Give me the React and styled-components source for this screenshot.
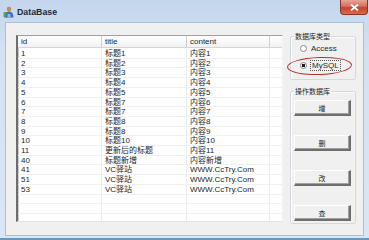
import React from 'react'
import styled, { createGlobalStyle } from 'styled-components'

const rows = [
    ['1', '标题1', '内容1'],
    ['2', '标题2', '内容2'],
    ['3', '标题3', '内容3'],
    ['4', '标题4', '内容4'],
    ['5', '标题5', '内容5'],
    ['6', '标题7', '内容6'],
    ['7', '标题7', '内容7'],
    ['8', '标题8', '内容8'],
    ['9', '标题8', '内容9'],
    ['10', '标题10', '内容10'],
    ['11', '更新后的标题', '内容11'],
    ['40', '标题新增', '内容新增'],
    ['41', 'VC驿站', 'WWW.CcTry.Com'],
    ['51', 'VC驿站', 'WWW.CcTry.Com'],
    ['53', 'VC驿站', 'WWW.CcTry.Com'],
    ['', '', ''],
    ['', '', ''],
    ['', '', ''],
]

const columns = [84, 85, 83]

const AppIcon = () => (
    <svg width="11" height="12" viewBox="0 0 11 12">
        <rect x="0.5" y="6" width="6" height="5.5" rx="1" fill="#5aa84a" />
        <circle cx="6" cy="3" r="2.3" fill="#c98a4a" />
        <path d="M2.5 11.5 C2.5 7 4 5.5 6 5.5 C8 5.5 10.5 7 10.5 11.5 Z" fill="#3f6fc0" />
        <rect x="4.5" y="8" width="3" height="3.5" fill="#8fb8e8" />
    </svg>
)

const App = () => {
    return (
        <>
            <GlobalStyle />
            <Window>
                <TitleBar>
                    <AppIcon />
                    <Title>DataBase</Title>
                    <CloseButton>
                        <svg width="9" height="7" viewBox="0 0 9 7">
                            <path d="M1 0.5 L8 6.5 M8 0.5 L1 6.5" stroke="#fff" strokeWidth="1.8" />
                        </svg>
                    </CloseButton>
                </TitleBar>
                <Client>
                    <ListView>
                        <HeaderRow>
                            <HeaderCell $w={columns[0]}>id</HeaderCell>
                            <HeaderCell $w={columns[1]}>title</HeaderCell>
                            <HeaderCell $w={columns[2]}>content</HeaderCell>
                            <HeaderCell $w={13} />
                        </HeaderRow>
                        <Body>
                            {rows.map((r, i) => (
                                <Row key={i}>
                                    <Cell $w={columns[0]}>{r[0]}</Cell>
                                    <Cell $w={columns[1]}>{r[1]}</Cell>
                                    <Cell $w={columns[2]}>{r[2]}</Cell>
                                    <Cell $w={13} />
                                </Row>
                            ))}
                        </Body>
                    </ListView>
                    <Side>
                        <Group>
                            <Legend>数据库类型</Legend>
                            <RadioRow $top={3}>
                                <Radio />
                                <RadioLabel>Access</RadioLabel>
                            </RadioRow>
                            <RadioRow $top={7}>
                                <Radio $checked />
                                <RadioLabel $focus>MySQL</RadioLabel>
                                <Circled />
                            </RadioRow>
                            <GroupSpacer />
                        </Group>
                        <Group $grow>
                            <Legend>操作数据库</Legend>
                            <Buttons>
                                <Button>增</Button>
                                <Button>删</Button>
                                <Button>改</Button>
                                <Button>查</Button>
                            </Buttons>
                        </Group>
                    </Side>
                </Client>
            </Window>
        </>
    )
}

export default App

const GlobalStyle = createGlobalStyle`
    html, body {
        margin: 0;
        padding: 0;
        background: #d6e3f1;
    }
    * {
        box-sizing: border-box;
    }
`

const Window = styled.div`
    width: 369px;
    height: 240px;
    display: flex;
    flex-direction: column;
    background: linear-gradient(180deg, #c3d6ec 0%, #d3e1f1 20%, #dae6f3 100%);
    padding: 0 5px 2px 5px;
    border-bottom: 2px solid #6a97bd;
    font-family: 'Liberation Sans', 'Noto Sans CJK SC', sans-serif;
`

const TitleBar = styled.div`
    height: 22px;
    flex: none;
    display: flex;
    align-items: center;
    padding-top: 2px;
    margin-left: -2px;
    position: relative;
`

const Title = styled.div`
    font-family: 'Liberation Sans', sans-serif;
    font-weight: bold;
    font-size: 8.8px;
    color: #1b2a3c;
    margin-left: 3px;
`

const CloseButton = styled.div`
    position: absolute;
    right: -4px;
    top: 0;
    width: 28px;
    height: 15px;
    border: 1px solid #8a3325;
    border-top: none;
    border-radius: 0 0 4px 4px;
    background: linear-gradient(180deg, #e8a496 0%, #d4705d 45%, #c2432e 55%, #d96a50 100%);
    display: flex;
    align-items: center;
    justify-content: center;
`

const Client = styled.div`
    flex: 1;
    display: flex;
    align-items: flex-start;
    background: #f0f0f0;
    border: 1px solid #aebfd3;
    padding: 9px 0 0 10px;
`

const ListView = styled.div`
    width: 267px;
    height: 187px;
    margin-top: 3px;
    background: #fff;
    border-top: 1px solid #a0a0a0;
    border-left: 2px solid #6e6e6e;
    border-right: 1px solid #f4f4f4;
    border-bottom: 1px solid #e3e3e3;
    box-shadow: inset 1px 1px 0 #c8c8c8;
    overflow: hidden;
    font-size: 8px;
    color: #1e1e1e;
`

const HeaderRow = styled.div`
    display: flex;
    height: 12px;
    background: linear-gradient(180deg, #ffffff 0%, #f7f8f9 60%, #eef0f2 100%);
    border-bottom: 1px solid #d5d5d5;
`

const HeaderCell = styled.div`
    flex: none;
    width: ${(p) => p.$w}px;
    padding-left: 3px;
    line-height: 11px;
    border-right: 1px solid #cfcfcf;
    white-space: nowrap;
`

const Body = styled.div`
    padding-top: 1px;
`

const Row = styled.div`
    display: flex;
    height: 9.71px;
    border-bottom: 1px solid #f0f0f0;
`

const Cell = styled.div`
    flex: none;
    width: ${(p) => p.$w}px;
    padding-left: 3px;
    line-height: 9.5px;
    border-right: 1px solid #ececec;
    white-space: nowrap;
    overflow: hidden;
`

const Side = styled.div`
    display: flex;
    flex-direction: column;
    gap: 7px;
    margin-left: 7px;
    width: 66px;
    height: 192px;
`

const Group = styled.fieldset`
    margin: 0;
    padding: 0;
    border: 1px solid #d3d9df;
    box-shadow: inset 1px 1px 0 #fff;
    border-radius: 2px;
    flex: ${(p) => (p.$grow ? 1 : 'none')};
    min-width: 0;
`

const Legend = styled.legend`
    font-size: 7px;
    line-height: 8px;
    color: #1e1e1e;
    margin-left: 3px;
    padding: 0 1px;
    font-family: 'Noto Sans CJK SC', sans-serif;
`

const RadioRow = styled.div`
    position: relative;
    display: flex;
    align-items: center;
    height: 10px;
    margin-top: ${(p) => p.$top}px;
    padding-left: 9px;
`

const Radio = styled.span`
    width: 7px;
    height: 7px;
    border-radius: 50%;
    border: 1px solid #8a8a8a;
    background: ${(p) => (p.$checked ? 'radial-gradient(circle, #1a1a1a 0 1.5px, #fff 2px)' : '#fff')};
`

const RadioLabel = styled.span`
    font-size: 8px;
    margin-left: ${(p) => (p.$focus ? 4 : 3)}px;
    padding: 0 1px;
    line-height: 9px;
    color: #2a2a2a;
    outline: ${(p) => (p.$focus ? '1px dotted #555' : 'none')};
`

const Circled = styled.span`
    position: absolute;
    left: -4px;
    top: -3px;
    width: 65px;
    height: 18px;
    border: 1.5px solid #b3322e;
    border-radius: 50%;
    transform: rotate(-2deg);
`

const GroupSpacer = styled.div`
    height: 9px;
`

const Buttons = styled.div`
    display: flex;
    flex-direction: column;
    gap: 19px;
    padding: 5px 0 0 3px;
`

const Button = styled.div`
    width: 57px;
    height: 16px;
    display: flex;
    align-items: center;
    justify-content: center;
    background: #f0f0f0;
    border-top: 1px solid #fff;
    border-left: 1px solid #fff;
    border-right: 2px solid #6e6e6e;
    border-bottom: 2px solid #6e6e6e;
    box-shadow: inset -1px -1px 0 #a0a0a0;
    font-family: 'Noto Sans CJK SC', sans-serif;
    font-size: 7px;
    color: #1e1e1e;
`
